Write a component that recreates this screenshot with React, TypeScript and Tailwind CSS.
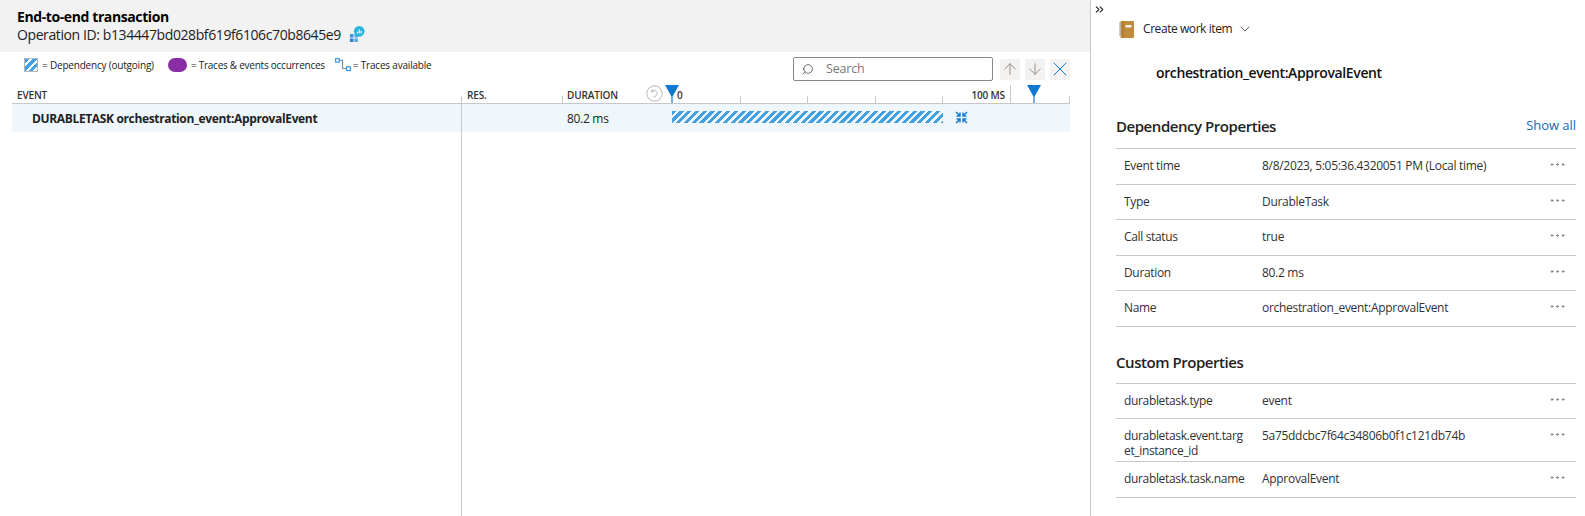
import { ArrowDown, ArrowUp, ChevronDown, ChevronsRight, Ellipsis, Search, X } from 'lucide-react';

const dependencyRows = [
  { name: 'Event time', value: '8/8/2023, 5:05:36.4320051 PM (Local time)' },
  { name: 'Type', value: 'DurableTask' },
  { name: 'Call status', value: 'true' },
  { name: 'Duration', value: '80.2 ms' },
  { name: 'Name', value: 'orchestration_event:ApprovalEvent' },
];

const customRows = [
  { name: 'durabletask.type', value: 'event' },
  { name: 'durabletask.event.target_instance_id', value: '5a75ddcbc7f64c34806b0f1c121db74b' },
  { name: 'durabletask.task.name', value: 'ApprovalEvent' },
];

function PropertyTable({ rows }: { rows: { name: string; value: string }[] }) {
  return (
    <div className="border-t border-[#c8c8c8]">
      {rows.map((row) => (
        <div key={row.name} className="flex min-h-[35.5px] border-b border-[#c8c8c8] pb-[3px] pl-[8px] pt-[10px] text-[12px] leading-[14.5px] tracking-[-0.34px] text-[#323130]">
          <div className="w-[138px] shrink-0 pr-[14px] break-all">{row.name}</div>
          <div className="flex-1 tracking-[-0.3px]">{row.value}</div>
          <Ellipsis className="mr-[9px] -mt-[4px] h-[19px] w-[19px] text-[#666]" strokeWidth={1.1} />
        </div>
      ))}
    </div>
  );
}

function Marker() {
  return (
    <svg width="14" height="18" viewBox="0 0 14 18">
      <path d="M0 0H14L7.6 11.5V18H6.4V11.5Z" fill="#0f78d4" />
    </svg>
  );
}

function AppInsightsIcon() {
  return (
    <svg width="16" height="16" viewBox="0 0 18 18">
      <rect x="1" y="9" width="4" height="4" fill="#3b97e0" />
      <rect x="6" y="9" width="4" height="4" fill="#5aa9e6" />
      <rect x="1" y="14" width="4" height="4" fill="#2f86d0" />
      <rect x="6" y="14" width="4" height="4" fill="#5aa9e6" />
      <circle cx="11.5" cy="6" r="6" fill="#28b6dc" />
      <path d="M8.8 6.5h1.2v2h-1.2zM10.9 4h1.2v4.5h-1.2zM13 5.4h1.2v3.1H13z" fill="#fff" />
    </svg>
  );
}

function TraceIcon() {
  return (
    <svg width="17" height="14" viewBox="0 0 17 14" fill="none" stroke="#3b9be8" strokeWidth="1.2">
      <rect x="0.6" y="0.6" width="3.6" height="3.6" />
      <path d="M4.2 2.4H7.5V10.5H11.5" stroke="#6f93ad" />
      <rect x="11.5" y="8.8" width="3.8" height="3.8" />
    </svg>
  );
}

function ResetIcon() {
  return (
    <svg width="17" height="17" viewBox="0 0 17 17" fill="none" stroke="#b5b5b5">
      <circle cx="8.5" cy="8.5" r="7.7" />
      <path d="M6.5 4.5 5 6.6l2.4.4M5.2 6.5c2-1.6 5.6-1 5.9 1.6.2 2-1.4 3.2-3.6 4.2" />
    </svg>
  );
}

function CollapseIcon() {
  return (
    <svg width="13" height="13" viewBox="0 0 13 13" fill="none" stroke="#0f78d4" strokeWidth="1.4">
      <path d="M1 1l3.6 3.6M1.6 5H5V1.6M12 1 8.4 4.6M11.4 5H8V1.6M1 12l3.6-3.6M1.6 8H5v3.4M12 12 8.4 8.4M11.4 8H8v3.4" />
    </svg>
  );
}

function BookIcon() {
  return (
    <svg width="15" height="17" viewBox="0 0 15 17">
      <rect x="1.5" y="0" width="13.5" height="17" rx="1" fill="#bf8a3a" />
      <path d="M3.5 0H4.5V17H3.5Z" fill="#a87428" />
      <path d="M0 2h2.5M0 4h2.5M0 6h2.5M0 8h2.5M0 10h2.5M0 12h2.5M0 14h2.5" stroke="#9c9c9c" strokeWidth="1" />
      <rect x="6.5" y="4" width="6" height="2.5" fill="#f7f2e9" />
    </svg>
  );
}

function Tick() {
  return <div className="h-[7px] w-px shrink-0 bg-[#c8c8c8]" />;
}

export default function App() {
  return (
    <div className="flex h-[516px] w-[1585px] overflow-hidden bg-white font-['Open_Sans','Noto_Sans',sans-serif] text-black">
      <div className="flex w-[1091px] shrink-0 flex-col border-r border-[#c8c8c8]">
        <div className="h-[52px] shrink-0 bg-[#f2f2f2] pl-[17px] pt-[8px]">
          <div className="text-[14px] font-bold leading-[18px] tracking-[-0.4px]">End-to-end transaction</div>
          <div className="flex items-center gap-[8px] text-[14px] leading-[17px] tracking-[-0.4px] text-[#222]">
            Operation ID: b134447bd028bf619f6106c70b8645e9
            <span className="-mt-[2px] flex"><AppInsightsIcon /></span>
          </div>
        </div>

        <div className="flex h-[36px] shrink-0 items-start pl-[24px] pr-[20px] text-[10px] leading-[14px] tracking-[-0.2px] text-[#222]">
          <div className="mt-[6px] flex items-center">
            <span className="h-[14px] w-[14px] border border-[#b5b5b5] bg-[repeating-linear-gradient(135deg,#42a0e8_0,#42a0e8_3px,#fff_3px,#fff_5.5px)]" />
            <span className="ml-[4px]">= Dependency (outgoing)</span>
            <span className="ml-[14px] h-[14px] w-[19px] rounded-full bg-[#8a2da5]" />
            <span className="ml-[4px] tracking-[-0.25px]">= Traces &amp; events occurrences</span>
            <span className="ml-[10px] flex"><TraceIcon /></span>
            <span className="ml-[1px]">= Traces available</span>
          </div>
          <div className="ml-auto mt-[5px] flex items-center">
            <div className="flex h-[24px] w-[200px] items-center rounded-[2px] border border-[#8a8886] pl-[7px]">
              <Search className="h-[13px] w-[13px] -scale-x-100 text-[#444]" strokeWidth={1.4} />
              <span className="ml-[12px] text-[12.5px] text-[#777]">Search</span>
            </div>
            <button type="button" className="ml-[7px] flex h-[21px] w-[20px] items-center justify-center bg-[#f3f2f1] text-[#8a8886]">
              <ArrowUp className="h-[18px] w-[18px]" strokeWidth={1.2} />
            </button>
            <button type="button" className="ml-[5px] flex h-[21px] w-[20px] items-center justify-center bg-[#f3f2f1] text-[#8a8886]">
              <ArrowDown className="h-[18px] w-[18px]" strokeWidth={1.2} />
            </button>
            <button type="button" className="ml-[5px] flex h-[21px] w-[20px] items-center justify-center bg-[#f3f2f1] text-[#0f78d4]">
              <X className="h-[24px] w-[24px] shrink-0" strokeWidth={1} />
            </button>
          </div>
        </div>

        <div className="flex min-h-0 flex-1 pl-[12px] pr-[20px]">
          <div className="flex w-[450px] shrink-0 flex-col">
            <div className="flex h-[16px] shrink-0 items-end justify-between border-b border-[#c8c8c8] text-[10px] font-semibold leading-[14px] tracking-[-0.15px] text-[#333]">
              <div className="self-start pl-[5px]">EVENT</div>
              <Tick />
            </div>
            <div className="flex h-[28px] shrink-0 items-center border-r border-[#c8c8c8] bg-[#eff6fc] pl-[20px] pt-[1px] text-[12px] font-bold tracking-[-0.35px] text-[#222]">
              DURABLETASK orchestration_event:ApprovalEvent
            </div>
            <div className="flex-1 border-r border-[#c8c8c8]" />
          </div>
          <div className="flex min-w-0 flex-1 flex-col">
            <div className="flex h-[16px] shrink-0 items-end border-b border-[#c8c8c8] text-[10px] font-semibold leading-[14px] tracking-[-0.15px] text-[#333]">
              <div className="w-[100px] shrink-0 self-start pl-[5px]">RES.</div>
              <Tick />
              <div className="flex w-[109px] shrink-0 items-start self-start pl-[4px]">
                <span>DURATION</span>
                <span className="ml-[28px] -mt-[3px] flex"><ResetIcon /></span>
              </div>
              <div className="relative flex h-full flex-1 items-end">
                <div className="flex h-full w-[67.6px] shrink-0 items-start pl-[5px]">0</div>
                <div className="flex h-full w-[67.6px] shrink-0 items-end"><Tick /></div>
                <div className="flex h-full w-[67.6px] shrink-0 items-end"><Tick /></div>
                <div className="flex h-full w-[67.6px] shrink-0 items-end"><Tick /></div>
                <div className="flex h-full w-[67.6px] shrink-0 items-end justify-between">
                  <Tick />
                  <span className="self-start pr-[5px]">100 MS</span>
                </div>
                <div className="flex h-full flex-1 items-end justify-between">
                  <div className="h-[18px] w-px shrink-0 bg-[#c8c8c8]" />
                  <Tick />
                </div>
                <div className="absolute -left-[7px] -top-[3px] flex"><Marker /></div>
                <div className="absolute left-[355px] -top-[3px] flex"><Marker /></div>
              </div>
            </div>
            <div className="flex h-[28px] shrink-0 items-center bg-[#eff6fc] text-[12px] text-[#222]">
              <div className="w-[105px] shrink-0" />
              <div className="w-[105px] shrink-0 pt-[1px] tracking-[-0.3px]">80.2 ms</div>
              <div className="mb-[3px] h-[12px] w-[271px] shrink-0 bg-[repeating-linear-gradient(135deg,#42a0e0_0,#42a0e0_3px,#eff6fc_3px,#eff6fc_5.5px)]" />
              <div className="mb-[2px] ml-[12px] flex"><CollapseIcon /></div>
            </div>
          </div>
        </div>
      </div>

      <div className="min-w-0 flex-1 pl-[25px] pr-[9px]">
        <ChevronsRight className="-ml-[23px] mt-[3px] h-[13px] w-[13px] text-[#222]" strokeWidth={2} />
        <div className="mt-[4px] flex items-center pl-[3px] text-[12px] leading-[18px] tracking-[-0.43px] text-[#222]">
          <BookIcon />
          <span className="ml-[9px]">Create work item</span>
          <ChevronDown className="ml-[5px] h-[16px] w-[16px] text-[#333]" strokeWidth={1.2} />
        </div>
        <div className="mt-[25px] pl-[40px] text-[14px] font-semibold leading-[20px] tracking-[-0.38px] text-[#111]">orchestration_event:ApprovalEvent</div>
        <div className="mt-[31px] flex h-[24px] items-center justify-between">
          <span className="text-[15px] font-semibold tracking-[-0.45px] text-[#222]">Dependency Properties</span>
          <span className="text-[13px] tracking-[-0.05px] text-[#0f6cbd]">Show all</span>
        </div>
        <div className="mt-[10px]">
          <PropertyTable rows={dependencyRows} />
        </div>
        <div className="mt-[24px] text-[15px] font-semibold leading-[22px] tracking-[-0.45px] text-[#222]">Custom Properties</div>
        <div className="mt-[10px]">
          <PropertyTable rows={customRows} />
        </div>
      </div>
    </div>
  );
}
